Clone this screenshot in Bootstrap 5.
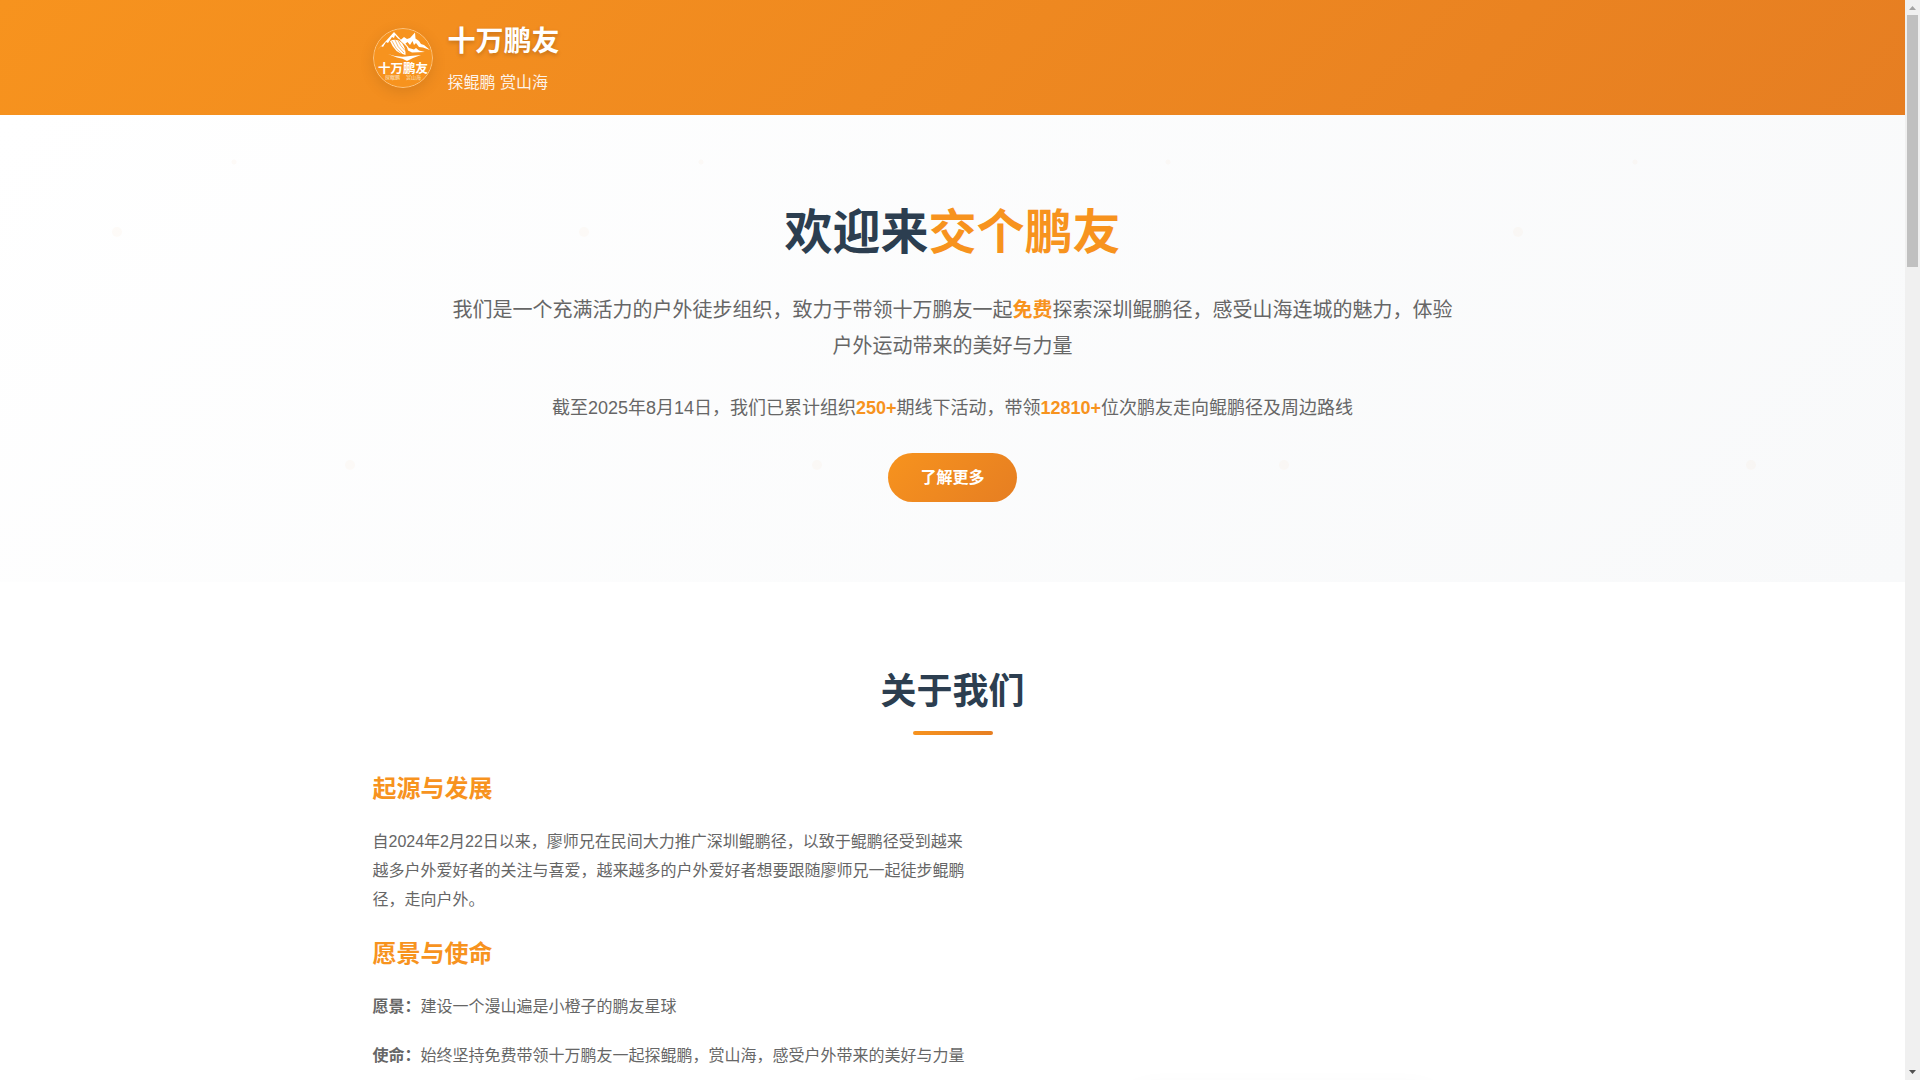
<!DOCTYPE html>
<html lang="zh-CN">
<head>
<meta charset="utf-8">
<meta name="viewport" content="width=device-width, initial-scale=1">
<title>十万鹏友</title>
<link href="https://cdn.jsdelivr.net/npm/bootstrap@5.3.0/dist/css/bootstrap.min.css" rel="stylesheet">
<style>
  :root { --orange: #f7931e; --orange-deep: #e67e22; --ink: #2c3e50; --muted: #666; }
  body { font-family: "Liberation Sans", "Noto Sans CJK SC", sans-serif; font-size: 16px; line-height: 26px; color: #333; background: #fff; }
  .viewport { height: 100vh; overflow: hidden; }
  .page-wrap { max-width: 1200px; padding: 0 20px; }

  .site-header { background: linear-gradient(135deg, var(--orange), var(--orange-deep)); padding: 20px 0; }
  .brand { gap: 15px; color: #fff; }
  .brand:hover { color: #fff; }
  .brand-logo { width: 60px; height: 60px; border-radius: 50%; box-shadow: 0 4px 15px rgba(0,0,0,.1); }
  .brand-name { font-size: 28px; line-height: 43px; margin-bottom: 7px; text-shadow: 0 2px 4px rgba(0,0,0,.2); }
  .brand-tag { line-height: 25px; opacity: .9; }

  .hero { padding: 80px 0; background: linear-gradient(135deg, #fff 0%, #f8f9fa 100%); }
  .hero-dots { z-index: 0; }
  .hero-body { z-index: 1; }
  .hero-title { font-size: 48px; line-height: 75px; margin-bottom: 22px; color: var(--ink); }
  .accent { color: var(--orange); }
  .hero-text { max-width: 1000px; font-size: 20px; line-height: 36px; margin-bottom: 30px; color: var(--muted); }
  .hero-stats { font-size: 18px; line-height: 29px; margin-bottom: 30px; color: var(--muted); }
  .btn-more { padding: 12px 32px; line-height: 25px; border: 0; border-radius: 25px; color: #fff; background: linear-gradient(135deg, var(--orange), var(--orange-deep)); }
  .btn-more:hover { color: #fff; }

  .about { padding: 80px 0; }
  .section-title { font-size: 36px; line-height: 60px; margin-bottom: 34px; color: var(--ink); }
  .section-title::after { content: ""; display: block; width: 80px; height: 4px; margin: 9px auto 0; border-radius: 2px; background: linear-gradient(135deg, var(--orange), var(--orange-deep)); }
  .about-grid { display: grid; grid-template-columns: 6fr 5fr; gap: 60px; }
  .about-copy h3 { font-size: 24px; line-height: 40px; margin-bottom: 18px; color: var(--orange); }
  .about-copy p { line-height: 29px; margin-bottom: 20px; color: var(--muted); }
  .about-photo { min-height: 620px; }
  .photo-card { width: 300px; height: 300px; border-radius: 15px; background: #fff; box-shadow: 0 10px 30px rgba(0,0,0,.1); }

  .scroll-track { width: 15px; background: #f0f0f0; }
  .scroll-thumb { width: 11px; height: 252px; background: #c0c0c0; }
  .scroll-arrow { width: 15px; height: 15px; }
</style>
</head>
<body>
<div class="viewport d-flex">
  <div class="flex-grow-1 overflow-hidden">
    <header class="site-header">
      <div class="page-wrap mx-auto">
        <a href="#" class="brand d-inline-flex align-items-center text-decoration-none align-top">
          <svg class="brand-logo flex-shrink-0" viewBox="0 0 60 60" role="img" aria-label="十万鹏友">
            <circle cx="30" cy="30" r="29.5" fill="#f7931e" stroke="#fbd09a" stroke-width=".8"/>
            <g fill="#fff">
              <!-- left ridge -->
              <path d="M4 22.500 12 14 21 4l5 5.500 3 3.500-4-2.500-3-3.500-1 3-2-1-4 6-2-1-3 5-2-1z"/>
              <!-- middle and right ridges -->
              <path d="M27 12.500 31 9l3 2 3-1 5-5.500.5 6L46 13l2 3 3 1 6 5-7-2.500-4-.5-3-4-2 2-1.500-4-2.500 4-2.500-3-2 1.500 2.500 4.500-4-4z"/>
              <path d="M33 16l3 4 5 1.500 2-1.500 3 2.500 6 1.500-13 .5-4-2z"/>
              <!-- hull -->
              <path d="M17 13q7-3.500 12 2 4 6 3.500 12-11-2-15.500-14z"/>
              <!-- waves -->
              <path d="M15 26q10 4 22 2l11-1-8 3-6 3q-4-3-10-3.500z"/>
            </g>
            <g fill="none" stroke="#f7931e" stroke-width=".6">
              <path d="M19 13q3 8 11 14M22 12q2 7 9 13M25 12.500q2 5 7 10"/>
            </g>
            <text x="30" y="45" text-anchor="middle" font-size="12.500" font-weight="700" fill="#fff">十万鹏友</text>
            <text x="12" y="51" font-size="5" fill="#fde3c3">探鲲鹏</text>
            <text x="33" y="51" font-size="5" fill="#fde3c3">赏山海</text>
          </svg>
          <span>
            <span class="brand-name d-block fw-bold">十万鹏友</span>
            <span class="brand-tag d-block">探鲲鹏 赏山海</span>
          </span>
        </a>
      </div>
    </header>

    <main>
      <section class="hero position-relative text-center">
        <svg class="hero-dots position-absolute top-0 start-0 w-100 h-100" aria-hidden="true">
          <defs>
            <pattern id="dots" width="467" height="467" patternUnits="userSpaceOnUse">
              <circle cx="117" cy="117" r="5" fill="#f7931e" fill-opacity=".03"/>
              <circle cx="350" cy="350" r="5" fill="#f7931e" fill-opacity=".03"/>
              <circle cx="234" cy="47" r="2.500" fill="#f7931e" fill-opacity=".03"/>
            </pattern>
          </defs>
          <rect width="100%" height="100%" fill="url(#dots)"/>
        </svg>
        <div class="hero-body page-wrap mx-auto position-relative">
          <h1 class="hero-title fw-bold">欢迎来<span class="accent">交个鹏友</span></h1>
          <p class="hero-text mx-auto">我们是一个充满活力的户外徒步组织，致力于带领十万鹏友一起<strong class="accent">免费</strong>探索深圳鲲鹏径，感受山海连城的魅力，体验户外运动带来的美好与力量</p>
          <p class="hero-stats">截至2025年8月14日，我们已累计组织<strong class="accent">250+</strong>期线下活动，带领<strong class="accent">12810+</strong>位次鹏友走向鲲鹏径及周边路线</p>
          <a href="#about" class="btn btn-more fw-bold align-top">了解更多</a>
        </div>
      </section>

      <section id="about" class="about">
        <div class="page-wrap mx-auto">
          <h2 class="section-title fw-bold text-center">关于我们</h2>
          <div class="about-grid">
            <div class="about-copy">
              <h3 class="fw-bold">起源与发展</h3>
              <p>自2024年2月22日以来，廖师兄在民间大力推广深圳鲲鹏径，以致于鲲鹏径受到越来越多户外爱好者的关注与喜爱，越来越多的户外爱好者想要跟随廖师兄一起徒步鲲鹏径，走向户外。</p>
              <h3 class="fw-bold">愿景与使命</h3>
              <p><strong>愿景：</strong>建设一个漫山遍是小橙子的鹏友星球</p>
              <p><strong>使命：</strong>始终坚持免费带领十万鹏友一起探鲲鹏，赏山海，感受户外带来的美好与力量</p>
            </div>
            <div class="about-photo d-flex align-items-end justify-content-center">
              <div class="photo-card"></div>
            </div>
          </div>
        </div>
      </section>
    </main>
  </div>

  <div class="scroll-track d-flex flex-column align-items-center flex-shrink-0" aria-hidden="true">
    <svg class="scroll-arrow" viewBox="0 0 15 15"><path d="M4 10h7L7.500 6z" fill="#a3a3a3"/></svg>
    <div class="scroll-thumb"></div>
    <svg class="scroll-arrow mt-auto" viewBox="0 0 15 15"><path d="M4 5h7L7.500 9z" fill="#505050"/></svg>
  </div>
</div>
<script src="https://cdn.jsdelivr.net/npm/bootstrap@5.3.0/dist/js/bootstrap.bundle.min.js"></script>
</body>
</html>
